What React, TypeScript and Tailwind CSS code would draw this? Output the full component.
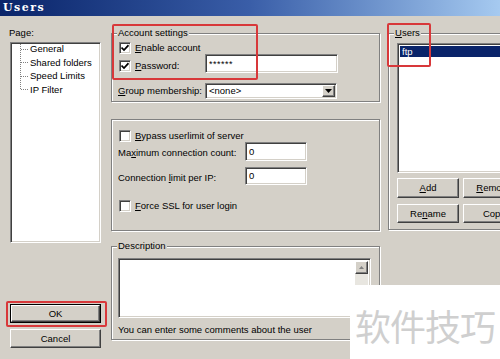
import React from "react";

const sunken =
  "border border-t-[#808080] border-l-[#808080] border-r-white border-b-white shadow-[inset_1px_1px_0_#404040,inset_-1px_-1px_0_#d4d0c8]";
const raised =
  "bg-[#d4d0c8] border border-t-white border-l-white border-r-[#404040] border-b-[#404040] shadow-[inset_-1px_-1px_0_#808080]";
const etched = "border border-[#808080] shadow-[1px_1px_0_#fff,inset_1px_1px_0_#fff]";

function Check({ checked }: { checked?: boolean }) {
  return (
    <span className={`w-[12px] h-[12px] bg-white shrink-0 flex items-center justify-center ${sunken}`}>
      {checked && (
        <svg width="8" height="8" viewBox="0 0 8 8">
          <path d="M0.5 3.5 L3 6 L7.5 1.2" stroke="#000" strokeWidth="1.7" fill="none" />
        </svg>
      )}
    </span>
  );
}

function U({ children }: { children: React.ReactNode }) {
  return <span className="underline underline-offset-[1px]">{children}</span>;
}

function Group({
  label,
  className,
  children,
}: {
  label: React.ReactNode;
  className?: string;
  children: React.ReactNode;
}) {
  return (
    <div className={`relative ${etched} ${className ?? ""}`}>
      <span className="absolute -top-[7px] left-[5px] bg-[#d4d0c8] px-[1px] leading-[12px]">{label}</span>
      {children}
    </div>
  );
}

export default function App() {
  return (
    <div className="relative w-[500px] h-[359px] overflow-hidden bg-[#d4d0c8] text-[9.5px] leading-[12px] text-black font-['Liberation_Sans',Arial,sans-serif]">
      {/* title bar */}
      <div className="h-[16px] bg-gradient-to-r from-[#0a246a] via-[#3a5ea8] to-[#a6caf0] flex items-center pl-[3px]">
        <span className="text-white font-bold text-[11px] tracking-[1.5px] font-['DejaVu_Serif',serif]">Users</span>
      </div>

      <div className="flex pl-[10px]">
        {/* left column */}
        <div className="w-[91px] shrink-0 flex flex-col">
          <div className="mt-[11px] h-[12px] -ml-[1px]">Page:</div>
          <div className={`mt-[3px] h-[201px] bg-white ${sunken} p-[1px]`}>
            <div className="flex -mt-[2px]">
              <svg width="17" height="56" className="shrink-0">
                <g stroke="#808080" strokeWidth="1" strokeDasharray="1 1" fill="none">
                  <path d="M8.5 0 V47" />
                  <path d="M9 7.5 H17" />
                  <path d="M9 20.5 H17" />
                  <path d="M9 34.5 H17" />
                  <path d="M9 47.5 H17" />
                </g>
              </svg>
              <div className="flex flex-col pl-[1px]">
                <div className="h-[13.6px] leading-[13.6px]">General</div>
                <div className="h-[13.6px] leading-[13.6px]">Shared folders</div>
                <div className="h-[13.6px] leading-[13.6px]">Speed Limits</div>
                <div className="h-[13.6px] leading-[13.6px]">IP Filter</div>
              </div>
            </div>
          </div>
          <div className={`mt-[61px] h-[19px] border border-black`}>
            <div className={`h-full ${raised} flex items-center justify-center`}>OK</div>
          </div>
          <div className={`mt-[6px] h-[19px] ${raised} flex items-center justify-center`}>Cancel</div>
        </div>

        {/* middle column */}
        <div className="ml-[10px] w-[269px] shrink-0 flex flex-col">
          <Group label="Account settings" className="mt-[17px] pt-[7px] pl-[7px] pb-[2px]">
            <div className="h-[13px] flex items-center gap-[4px]">
              <Check checked />
              <span>
                <U>E</U>nable account
              </span>
            </div>
            <div className="h-[19px] flex items-end">
              <div className="w-[86px] h-[13px] mb-[1px] flex items-center gap-[4px]">
                <Check checked />
                <span>
                  <U>P</U>assword:
                </span>
              </div>
              <div className={`w-[133px] h-[19px] bg-white ${sunken} flex items-center pl-[3px] text-[9px] tracking-[0.5px]`}>
                ******
              </div>
            </div>
            <div className="mt-[10px] h-[16px] flex items-center -ml-[1px]">
              <span className="w-[87px]">
                <U>G</U>roup membership:
              </span>
              <div className={`w-[132px] h-[16px] bg-white ${sunken} flex items-center justify-between pl-[3px] pr-[1px]`}>
                <span>&lt;none&gt;</span>
                <span className={`w-[13px] h-[12px] ${raised} flex items-center justify-center`}>
                  <svg width="7" height="4" viewBox="0 0 7 4">
                    <path d="M0 0 H7 L3.5 4 Z" fill="#000" />
                  </svg>
                </span>
              </div>
            </div>
          </Group>

          <Group label="" className="mt-[17px] pt-[10px] pl-[7px] pb-[18px]">
            <div className="h-[12px] flex items-center gap-[4px]">
              <Check />
              <span>
                <U>B</U>ypass userlimit of server
              </span>
            </div>
            <div className="h-[19px] flex items-center -ml-[1px]">
              <span className="w-[127px] pt-[2px]">
                Ma<U>x</U>imum connection count:
              </span>
              <div className={`w-[62px] h-[19px] bg-white ${sunken} flex items-center pl-[3px]`}>0</div>
            </div>
            <div className="mt-[6px] h-[18px] flex items-center -ml-[1px]">
              <span className="w-[127px] pt-[3px]">
                Connection <U>l</U>imit per IP:
              </span>
              <div className={`w-[62px] h-[18px] bg-white ${sunken} flex items-center pl-[3px]`}>0</div>
            </div>
            <div className="mt-[15px] h-[12px] flex items-center gap-[4px]">
              <Check />
              <span>
                <U>F</U>orce SSL for user login
              </span>
            </div>
          </Group>

          <Group label="Description" className="mt-[15px] pt-[11px] pl-[6px] pb-[2px]">
            <div className={`w-[253px] h-[60px] bg-white ${sunken} flex justify-end p-[2px]`}>
              <div className="w-[13px] bg-[#e8e6e0] flex flex-col">
                <div className={`h-[13px] ${raised} flex items-center justify-center`}>
                  <svg width="5" height="3" viewBox="0 0 5 3">
                    <path d="M0 3 H5 L2.5 0 Z" fill="#808080" />
                  </svg>
                </div>
              </div>
            </div>
            <div className="mt-[5px] h-[14px] flex items-center">You can enter some comments about the user</div>
          </Group>
        </div>

        {/* right column */}
        <div className="ml-[8px] w-[150px] shrink-0 flex flex-col">
          <Group
            label={
              <>
                <U>U</U>sers
              </>
            }
            className="mt-[17px] pt-[9px] pl-[8px] pb-[6px]"
          >
            <div className={`h-[130px] bg-white ${sunken} p-[2px]`}>
              <div className="h-[11px] bg-[#0a246a] text-white flex items-center pl-[2px]">ftp</div>
            </div>
            <div className="mt-[5px] flex gap-[4px]">
              <div className={`w-[62px] h-[20px] ${raised} flex items-center justify-center`}>
                <span>
                  <U>A</U>dd
                </span>
              </div>
              <div className={`w-[62px] h-[20px] ${raised} flex items-center justify-center`}>
                <span>
                  <U>R</U>emove
                </span>
              </div>
            </div>
            <div className="mt-[6px] flex gap-[4px]">
              <div className={`w-[62px] h-[19px] ${raised} flex items-center justify-center`}>
                <span>
                  Re<U>n</U>ame
                </span>
              </div>
              <div className={`w-[62px] h-[19px] ${raised} flex items-center justify-center`}>Copy</div>
            </div>
          </Group>
        </div>
      </div>

      {/* red annotations */}
      <div className="absolute left-[112px] top-[24px] w-[146px] h-[56px] border-2 border-[#d8383a] rounded-[2px]" />
      <div className="absolute left-[387px] top-[23px] w-[44px] h-[44px] border-2 border-[#d8383a] rounded-[2px]" />
      <div className="absolute left-[6px] top-[301px] w-[101px] h-[26px] border-2 border-[#d8383a] rounded-[2px]" />

      {/* watermark */}
      <div className="absolute left-[350px] top-[285px] w-[150px] h-[74px] bg-white flex items-center justify-center pt-[6px]">
        <span className="text-[36px] leading-[40px] text-[#cfcfcf] tracking-[-1px] font-['Noto_Sans_CJK_SC',sans-serif]">
          软件技巧
        </span>
      </div>
    </div>
  );
}
